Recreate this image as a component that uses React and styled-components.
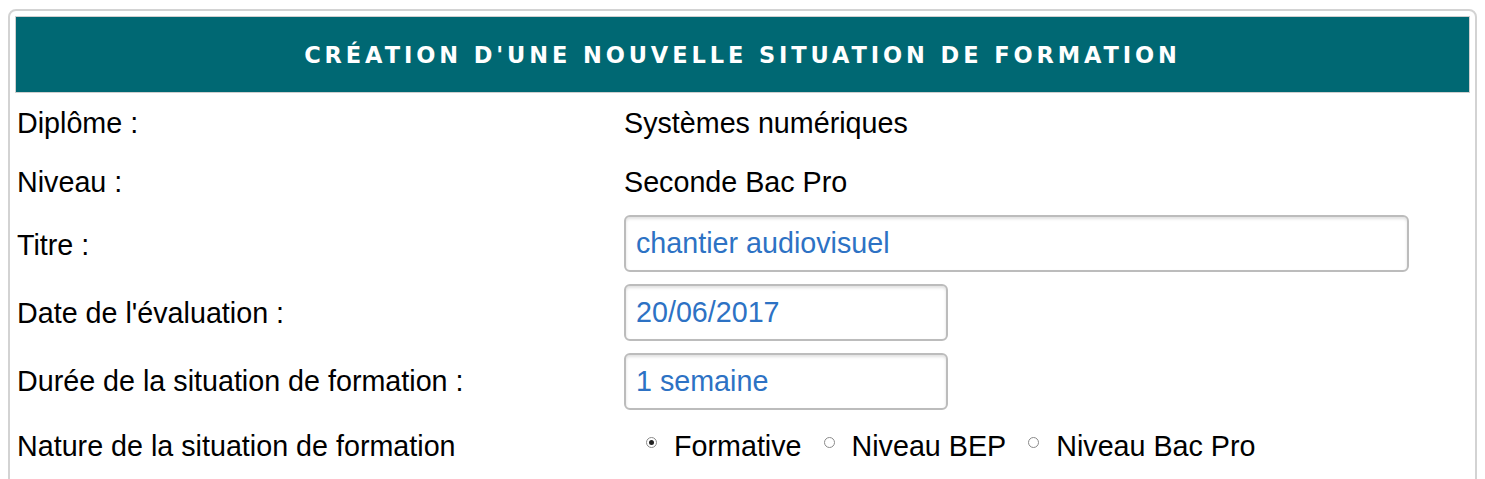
import React, { useState } from 'react'
import styled, { createGlobalStyle } from 'styled-components'

const Global = createGlobalStyle`
  html, body {
    margin: 0;
    padding: 0;
    background: #fff;
  }
  body {
    font-family: "Liberation Sans", Arial, sans-serif;
  }
`;

const Page = styled.div`
  padding: 9px 8px 0 8px;
  width: 1485px;
  box-sizing: border-box;
`;

const Box = styled.div`
  border: 2px solid #d3d3d3;
  border-radius: 8px;
  padding: 5px 5px 40px 5px;
  min-height: 520px;
  box-sizing: border-box;
`;

const Header = styled.div`
  background: #006873;
  border: 1px solid #cfcfcf;
  height: 75px;
  display: flex;
  align-items: center;
  justify-content: center;
  h1 {
    margin: 0;
    color: #fff;
    font-family: "DejaVu Sans", Verdana, sans-serif;
    font-weight: bold;
    font-size: 22.5px;
    letter-spacing: 3.9px;
    padding-top: 1px;
  }
`;

const Form = styled.div`
  display: flex;
  flex-direction: column;
  padding-left: 2px;
`;

const Row = styled.div`
  display: grid;
  grid-template-columns: 607px 1fr;
  align-items: center;
  height: ${p => p.h}px;
  font-size: 28.7px;
  color: #000;
`;

const Label = styled.span`
  padding-top: ${p => p.shift || 0}px;
`;

const Value = styled.div`
  color: #000;
`;

const Field = styled.input`
  box-sizing: border-box;
  width: ${p => p.w}px;
  height: 57px;
  border: 2px solid #bcbcbc;
  border-radius: 6px;
  box-shadow: inset 0 2px 3px rgba(0, 0, 0, 0.12);
  padding: 0 0 0 10px;
  font-family: "Liberation Sans", Arial, sans-serif;
  font-size: 28.7px;
  color: #2d72c4;
  background: #fff;
  outline: none;
`;

const Radios = styled.div`
  display: flex;
  align-items: center;
  padding-left: 22px;
`;

const Choice = styled.label`
  display: flex;
  align-items: center;
  margin-right: 22px;
  cursor: pointer;
`;

const Dot = styled.span`
  width: 11px;
  height: 11px;
  border-radius: 50%;
  border: 1px solid #8a8a8a;
  box-sizing: border-box;
  margin-right: 17px;
  margin-top: -7px;
  display: inline-flex;
  align-items: center;
  justify-content: center;
  background: #fff;
  &::after {
    content: '';
    width: 5px;
    height: 5px;
    border-radius: 50%;
    background: ${p => (p.on ? '#222' : 'transparent')};
  }
`;

export default function App() {
  const [nature, setNature] = useState('Formative');
  const options = ['Formative', 'Niveau BEP', 'Niveau Bac Pro'];
  return (
    <Page>
      <Global />
      <Box>
        <Header>
          <h1>CRÉATION D'UNE NOUVELLE SITUATION DE FORMATION</h1>
        </Header>
        <Form>
          <Row h={60}>
            <Label>Diplôme :</Label>
            <Value>Systèmes numériques</Value>
          </Row>
          <Row h={58}>
            <Label>Niveau :</Label>
            <Value>Seconde Bac Pro</Value>
          </Row>
          <Row h={65}>
            <Label shift={4}>Titre :</Label>
            <Field w={785} defaultValue="chantier audiovisuel" />
          </Row>
          <Row h={72}>
            <Label shift={2}>Date de l'évaluation :</Label>
            <Field w={324} defaultValue="20/06/2017" />
          </Row>
          <Row h={66}>
            <Label>Durée de la situation de formation :</Label>
            <Field w={324} defaultValue="1 semaine" />
          </Row>
          <Row h={64}>
            <Label>Nature de la situation de formation</Label>
            <Radios>
              {options.map(o => (
                <Choice key={o} onClick={() => setNature(o)}>
                  <Dot on={nature === o} />
                  {o}
                </Choice>
              ))}
            </Radios>
          </Row>
        </Form>
      </Box>
    </Page>
  );
}
